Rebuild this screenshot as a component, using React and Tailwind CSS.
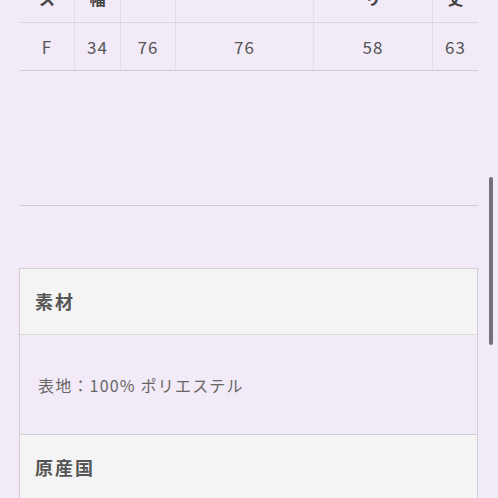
import React from "react";

const headers = [
  { label: "ス", w: "w-[54px]" },
  { label: "幅", w: "w-[46px]" },
  { label: "", w: "w-[55px]" },
  { label: "", w: "w-[138px]" },
  { label: "リ", w: "w-[119px]" },
  { label: "丈", w: "w-[46px]" },
];

const row = ["F", "34", "76", "76", "58", "63"];

const App = () => {
  return (
    <div
      className="relative h-[498px] overflow-hidden bg-[#f2eaf7] text-[#555]"
      style={{ fontFamily: '"Noto Sans CJK JP", "Noto Sans", sans-serif' }}
    >
      <div className="px-[20px]">
        {/* size table, header row scrolled off the top */}
        <div className="-mt-[20px]">
          <div className="flex h-[43px] border-b border-[#d9d1dd]">
            {headers.map((h, i) => (
              <div
                key={i}
                className={`${h.w} flex items-end justify-center pb-[13px] text-[16px] leading-[22px] font-bold text-[#444] ${
                  i > 0 ? "border-l border-[#e3dbe7]" : ""
                }`}
              >
                {h.label}
              </div>
            ))}
          </div>
          <div className="flex h-[48px] border-b border-[#d3cbd7]">
            {row.map((v, i) => (
              <div
                key={i}
                className={`${headers[i].w} flex items-center justify-center text-[17px] tracking-[1px] text-[#555] ${
                  i > 0 ? "border-l border-[#e3dbe7]" : ""
                }`}
              >
                {v}
              </div>
            ))}
          </div>
        </div>

        <div className="mt-[134px] h-px bg-[#d0c8d4]" />

        <div className="mt-[62px] -ml-px border border-[#d3ced6]">
          <div className="flex h-[66px] items-center border-b border-[#dcd8de] bg-[#f4f4f4] pl-[15px] text-[18px] tracking-[2px] font-bold text-[#555]">
            素材
          </div>
          <div className="flex h-[100px] items-center border-b border-[#d3ced6] pl-[18px] text-[16px] tracking-[1.2px] text-[#666]">
            表地：100% ポリエステル
          </div>
          <div className="flex h-[64px] items-center bg-[#f4f4f4] pl-[15px] text-[18px] tracking-[2px] font-bold text-[#555]">
            原産国
          </div>
        </div>
      </div>

      <div className="absolute right-[5px] top-[177px] h-[168px] w-[4px] rounded-full bg-[#78717b]" />
    </div>
  );
};

export default App;
